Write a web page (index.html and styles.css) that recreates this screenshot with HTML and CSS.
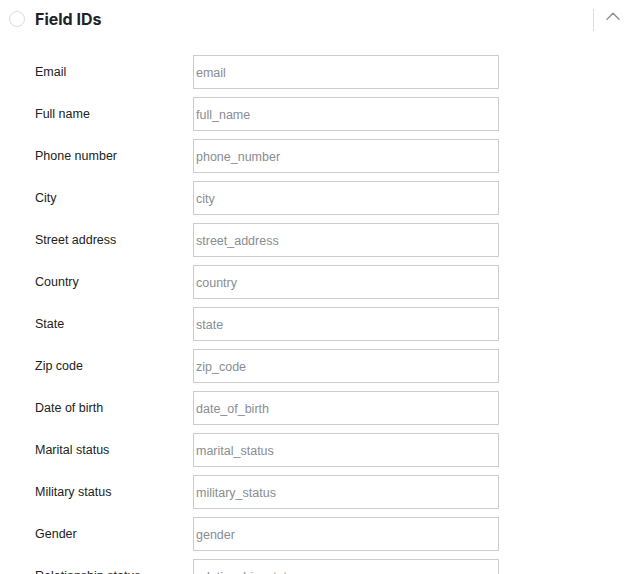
FILE: index.html
```html
<!DOCTYPE html>
<html lang="en">
<head>
    <meta charset="UTF-8">
    <meta name="viewport" content="width=device-width, initial-scale=1.0">
    <title>Field IDs</title>
    <link rel="stylesheet" href="styles.css">
</head>
<body>
    <div class="panel">
        <!-- Cabecera de la sección -->
        <div class="panel-header">
            <span class="status-circle"></span>
            <h2 class="panel-title">Field IDs</h2>
            <span class="header-divider"></span>
            <button class="collapse-btn" type="button" aria-label="Collapse">
                <svg width="14" height="8" viewBox="0 0 14 8" fill="none">
                    <path d="M1 7.2 L7 1.2 L13 7.2" stroke="#8b8f99" stroke-width="1.4" stroke-linecap="round" stroke-linejoin="round"/>
                </svg>
            </button>
        </div>

        <!-- Lista de campos -->
        <div class="field-list">
            <label for="f-email">Email</label>
            <input id="f-email" type="text" placeholder="email">

            <label for="f-full_name">Full name</label>
            <input id="f-full_name" type="text" placeholder="full_name">

            <label for="f-phone_number">Phone number</label>
            <input id="f-phone_number" type="text" placeholder="phone_number">

            <label for="f-city">City</label>
            <input id="f-city" type="text" placeholder="city">

            <label for="f-street_address">Street address</label>
            <input id="f-street_address" type="text" placeholder="street_address">

            <label for="f-country">Country</label>
            <input id="f-country" type="text" placeholder="country">

            <label for="f-state">State</label>
            <input id="f-state" type="text" placeholder="state">

            <label for="f-zip_code">Zip code</label>
            <input id="f-zip_code" type="text" placeholder="zip_code">

            <label for="f-date_of_birth">Date of birth</label>
            <input id="f-date_of_birth" type="text" placeholder="date_of_birth">

            <label for="f-marital_status">Marital status</label>
            <input id="f-marital_status" type="text" placeholder="marital_status">

            <label for="f-military_status">Military status</label>
            <input id="f-military_status" type="text" placeholder="military_status">

            <label for="f-gender">Gender</label>
            <input id="f-gender" type="text" placeholder="gender">

            <label for="f-relationship_status">Relationship status</label>
            <input id="f-relationship_status" type="text" placeholder="relationship_status">
        </div>
    </div>
</body>
</html>
```

FILE: styles.css
```css
html, body {
    margin: 0;
    overflow: hidden;
    background-color: #ffffff;
}

body {
    font-family: 'Liberation Sans', Arial, Helvetica, sans-serif;
    color: #1f2329;
}

.panel-header {
    display: flex;
    align-items: center;
    height: 37px;
    padding-left: 9px;
    padding-right: 8px;
}

.status-circle {
    box-sizing: border-box;
    width: 16px;
    height: 16px;
    border: 1.5px solid #dcdde0;
    border-radius: 50%;
    margin-top: 1px;
}

.panel-title {
    margin: 0 0 0 10px;
    font-family: Inter, 'Liberation Sans', sans-serif;
    font-size: 16px;
    font-weight: 700;
    color: #1f2329;
    flex: 1;
}

.header-divider {
    width: 1px;
    height: 22px;
    background-color: #dcdde0;
    margin-top: 2px;
}

.collapse-btn {
    border: none;
    background: none;
    padding: 0;
    margin-left: 12px;
    margin-bottom: 6px;
    display: flex;
    cursor: pointer;
}

.field-list {
    display: grid;
    grid-template-columns: 158px 306px;
    row-gap: 8px;
    align-items: center;
    padding-left: 35px;
    margin-top: 18px;
}

.field-list label {
    font-size: 12.5px;
    color: #222222;
}

.field-list input {
    box-sizing: border-box;
    height: 34px;
    margin: 0;
    padding: 1px 2px 0;
    border: 1px solid #cccccc;
    border-radius: 0;
    font-family: 'Liberation Sans', Arial, sans-serif;
    font-size: 12.5px;
    color: #222222;
    outline: none;
}

.field-list input::placeholder {
    color: #8a8d93;
}
```
